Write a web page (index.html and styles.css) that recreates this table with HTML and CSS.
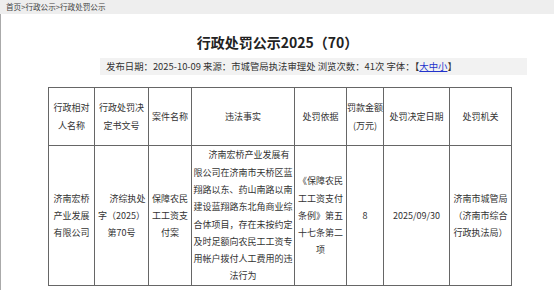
FILE: index.html
```html
<!DOCTYPE html>
<html lang="zh-CN">
<head>
<meta charset="utf-8">
<title>行政处罚公示2025（70）</title>
<link rel="stylesheet" href="styles.css">
</head>
<body>
<div class="crumb">首页&gt;行政公示&gt;行政处罚公示</div>
<div class="main">
  <h1 class="title">行政处罚公示2025（70）</h1>
  <div class="info">发布日期：2025-10-09 来源：市城管局执法审理处 浏览次数：41次 字体：【<a class="size" href="#">大中小</a>】</div>
  <table class="grid">
    <colgroup>
      <col class="c1"><col class="c2"><col class="c3"><col class="c4"><col class="c5"><col class="c6"><col class="c7"><col class="c8">
    </colgroup>
    <thead>
      <tr class="head">
        <th>行政相对人名称</th>
        <th>行政处罚决定书文号</th>
        <th>案件名称</th>
        <th>违法事实</th>
        <th>处罚依据</th>
        <th class="nowrap">罚款金额<br>(万元)</th>
        <th>处罚决定日期</th>
        <th>处罚机关</th>
      </tr>
    </thead>
    <tbody>
      <tr class="body">
        <td>济南宏桥产业发展有限公司</td>
        <td class="indent">济综执处字（2025）第70号</td>
        <td>保障农民工工资支付案</td>
        <td class="indent">济南宏桥产业发展有限公司在济南市天桥区蓝翔路以东、药山南路以南建设蓝翔路东北角商业综合体项目，存在未按约定及时足额向农民工工资专用帐户拨付人工费用的违法行为</td>
        <td>《保障农民工工资支付条例》第五十七条第二项</td>
        <td>8</td>
        <td>2025/09/30</td>
        <td>济南市城管局（济南市综合行政执法局）</td>
      </tr>
    </tbody>
  </table>
</div>
</body>
</html>
```
FILE: styles.css
```css
html, body {
  margin: 0;
  padding: 0;
  background: #ffffff;
}
body {
  font-family: "Noto Sans CJK SC", "Noto Sans", sans-serif;
  color: #333333;
}
.crumb {
  height: 14px;
  line-height: 14px;
  background: #eeeeee;
  padding-left: 6px;
  font-size: 7.6px;
  color: #444444;
}
.main {
  border-left: 1px solid #aaaaaa;
  min-height: 276px;
  box-sizing: border-box;
  padding-top: 18px;
}
.title {
  margin: 0;
  text-align: center;
  font-size: 14px;
  line-height: 20px;
  font-weight: bold;
  color: #222222;
}
.info {
  margin: 6px 0 0 99px;
  width: 427px;
  height: 17px;
  box-sizing: border-box;
  padding-left: 6px;
  background: #f2f2f2;
  font-size: 9.4px;
  line-height: 17px;
  color: #333333;
  white-space: nowrap;
}
.size {
  color: #2233cc;
  text-decoration: underline;
}
.grid {
  margin: 12px 0 0 47px;
  border-collapse: collapse;
  table-layout: fixed;
  width: 464px;
  font-size: 9px;
  line-height: 17.3px;
  color: #333333;
}
.c1 { width: 46px; }
.c2 { width: 54px; }
.c3 { width: 43px; }
.c4 { width: 103px; }
.c5 { width: 52px; }
.c6 { width: 37px; }
.c7 { width: 66px; }
.c8 { width: 62px; }
.grid th,
.grid td {
  border: 1px solid #666666;
  padding: 0 1px;
  text-align: center;
  vertical-align: middle;
  font-weight: normal;
  word-break: break-all;
}
.grid .nowrap {
  white-space: nowrap;
  padding: 0;
}
.grid .indent {
  text-indent: 12px;
}
.head {
  height: 58px;
}
.body {
  height: 140px;
}
```
